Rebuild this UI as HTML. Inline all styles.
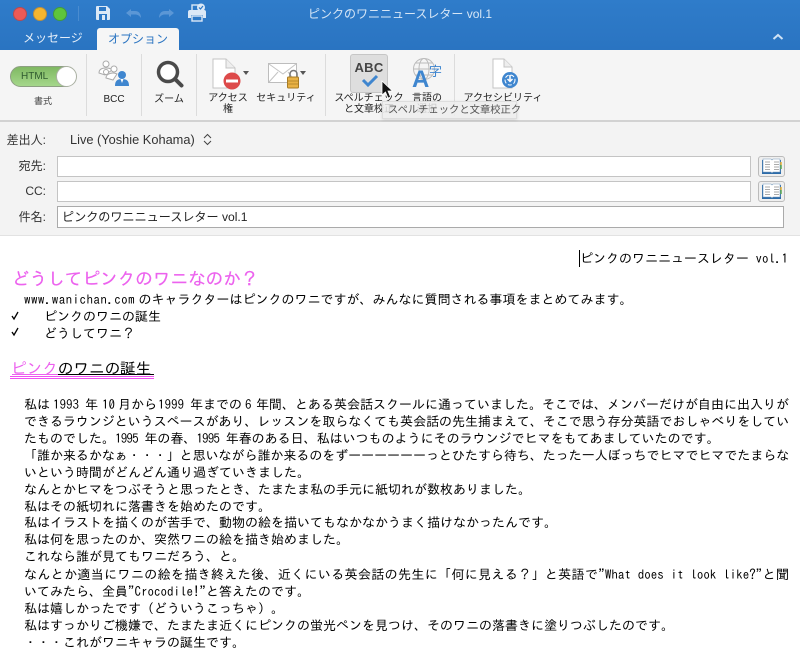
<!DOCTYPE html>
<html lang="ja"><head><meta charset="utf-8">
<style>
html,body{margin:0;padding:0;background:#fff}
#p{position:relative;width:800px;height:667px;overflow:hidden;background:#fff;font-family:"Liberation Sans","Noto Sans CJK JP",sans-serif}
.a{position:absolute;white-space:nowrap}
.r{font-size:10px;color:#222;text-align:center;line-height:11px}
.sep{position:absolute;top:54px;width:1px;height:62px;background:#dcdcdc}
.f{position:absolute;left:57px;width:692px;height:19px;background:#fff;border:1px solid #c4c4c4}
.l{position:absolute;font-size:12px;color:#333;text-align:right;width:46px;left:0;line-height:14px}
.b{position:absolute;font-family:IPAGothic,"Noto Sans CJK JP",monospace;font-size:13px;line-height:17px;color:#000;white-space:nowrap}
.j{left:24px;width:765px;white-space:normal;text-align:justify;text-align-last:justify}
.n{left:24px}
.x{letter-spacing:-.03px}
.d{letter-spacing:-.8px}
.bk{position:absolute;left:758px;width:25px;height:19px;background:#efefef;border:1px solid #bbb;border-radius:3px}
</style></head><body><div id="p">
<div class="a" style="left:0;top:0;width:800px;height:50px;background:linear-gradient(#2f7cca,#2a74c1)"></div>
<div class="a" style="left:13px;top:7px;width:12px;height:12px;border-radius:50%;background:#ec5a56;border:.5px solid #b84a50"></div>
<div class="a" style="left:33px;top:7px;width:12px;height:12px;border-radius:50%;background:#f5b52f;border:.5px solid #c0903a"></div>
<div class="a" style="left:53px;top:7px;width:12px;height:12px;border-radius:50%;background:#5ec53c;border:.5px solid #449a3c"></div>
<div class="a" style="left:78px;top:6px;width:1px;height:15px;background:#4a8cd0"></div>
<svg class="a" style="left:90px;top:0" width="130" height="26" viewBox="0 0 130 26">
<path d="M7 6h10l3 3v10a1 1 0 0 1-1 1H7a1 1 0 0 1-1-1V7a1 1 0 0 1 1-1z" fill="#dbe8f6"/>
<rect x="9" y="7" width="7" height="4" fill="#2c78c6"/><rect x="9" y="14" width="8" height="6" fill="#2c78c6"/><rect x="12" y="15" width="3" height="5" fill="#dbe8f6"/>
<path d="M36 13L41 9V11H45C49 11 51 14 51 18C49 15 47 14.500 45 14.500H41V17Z" fill="#5b97d6"/>
<path d="M36 13L41 9V11H45C49 11 51 14 51 18C49 15 47 14.500 45 14.500H41V17Z" fill="#5b97d6" transform="translate(120,0) scale(-1,1)"/>
<rect x="102" y="5" width="10" height="6" fill="none" stroke="#dbe8f6" stroke-width="1.400"/>
<path d="M100 10h14a2 2 0 0 1 2 2v6h-3v-3h-12v3h-3v-6a2 2 0 0 1 2-2z" fill="#dbe8f6"/>
<rect x="102" y="16" width="10" height="5" fill="none" stroke="#dbe8f6" stroke-width="1.400"/>
<circle cx="111" cy="7.500" r="4" fill="#dbe8f6"/><path d="M109 7.500l1.500 1.500 2.500-3" fill="none" stroke="#2c78c6" stroke-width="1.200"/>
</svg>
<div class="a" style="left:0;width:800px;top:6px;text-align:center;font-size:12px;line-height:16px;color:#d6e6f6">ピンクのワニニュースレター vol.1</div>
<div class="a" style="left:23px;top:30px;font-size:12px;line-height:16px;color:#e4eef9">メッセージ</div>
<div class="a" style="left:97px;top:28px;width:82px;height:22px;background:#f6f6f6;border-radius:3px 3px 0 0;text-align:center;font-size:12px;line-height:23px;color:#2a74c1">オプション</div>
<svg class="a" style="left:772px;top:33px" width="12" height="8"><path d="M1.500 6L6 2l4.500 4" fill="none" stroke="#cfe2f5" stroke-width="2"/></svg>

<div class="a" style="left:0;top:50px;width:800px;height:70px;background:#f5f5f5"></div>
<div class="a" style="left:0;top:120px;width:800px;height:2px;background:#d2d2d2"></div>
<div class="sep" style="left:86px"></div><div class="sep" style="left:141px"></div><div class="sep" style="left:196px"></div><div class="sep" style="left:325px"></div><div class="sep" style="left:454px"></div>

<div class="a" style="left:10px;top:66px;width:66px;height:21px;border-radius:11px;background:linear-gradient(#7fb862,#a5d78b);border:1px solid #8d9f82;box-sizing:border-box;font-size:10px;line-height:19px;color:#2f5a2f;padding-left:10px">HTML</div>
<div class="a" style="left:56px;top:66px;width:21px;height:21px;border-radius:50%;background:#fff;border:1px solid #aab0a2;box-sizing:border-box"></div>
<div class="a r" style="left:10px;width:66px;top:96px;color:#444;font-size:9px">書式</div>

<svg class="a" style="left:96px;top:58px" width="36" height="32" viewBox="0 0 36 32">
<g fill="#fff" stroke="#aaa" stroke-width="1"><circle cx="10" cy="6" r="3"/><path d="M3 15c0-4 3-5 7-5 3 0 5 .5 6 2l-7 5z"/><circle cx="18" cy="11" r="3"/><path d="M10 20c0-3 3-5 7-5 2 0 3 .500 4 1l-4 6z"/><circle cx="10" cy="14" r="2.500"/></g>
<circle cx="26" cy="17" r="4" fill="#3f86cf"/><path d="M19 28c0-5 2-7 7-7s7 2 7 7z" fill="#3f86cf"/><path d="M24.500 21l1.500 4 1.500-4z" fill="#fff"/>
</svg>
<div class="a r" style="left:87px;width:54px;top:94px">BCC</div>

<svg class="a" style="left:156px;top:60px" width="30" height="30" viewBox="0 0 30 30">
<circle cx="12" cy="12" r="9.500" fill="#fff" stroke="#4a4a4a" stroke-width="3.500"/><path d="M19.500 19.500l6 6" stroke="#4a4a4a" stroke-width="4" stroke-linecap="round"/>
</svg>
<div class="a r" style="left:142px;width:54px;top:94px">ズーム</div>

<svg class="a" style="left:212px;top:58px" width="38" height="32" viewBox="0 0 38 32">
<path d="M1 1h13l9 9v20H1z" fill="#fff" stroke="#c4c4c4"/><path d="M14 1v9h9" fill="#eee" stroke="#c4c4c4"/>
<circle cx="20" cy="23" r="8.500" fill="#dd4a4a"/><rect x="14" y="21.500" width="12" height="3" fill="#fff"/><path d="M31 13h6l-3 4z" fill="#555"/>
</svg>
<div class="a r" style="left:203px;width:50px;top:93px">アクセス<br>権</div>

<svg class="a" style="left:267px;top:62px" width="40" height="28" viewBox="0 0 40 28">
<rect x="1.500" y="1.500" width="28" height="19" fill="#fff" stroke="#bdbdbd"/><path d="M2 2l14 10L29 2M2 20l9-10M29 20l-8-10" fill="none" stroke="#c4c4c4"/>
<path d="M23 15v-3a3.500 3.500 0 0 1 7 0v3" fill="none" stroke="#777" stroke-width="1.500"/><rect x="20.500" y="15" width="11" height="11" rx="1" fill="#e9b245" stroke="#a87c25"/><path d="M21 19h10M21 22h10" stroke="#b98c30"/>
<path d="M33 9h6l-3 4z" fill="#555"/>
</svg>
<div class="a r" style="left:255px;width:62px;top:93px">セキュリティ</div>

<div class="a" style="left:350px;top:54px;width:36px;height:37px;background:#dedede;border:1px solid #c6c6c6;border-radius:3px"></div>
<div class="a" style="left:350px;top:59px;width:38px;text-align:center;font-size:13px;font-weight:bold;line-height:17px;letter-spacing:.3px;color:#444">ABC</div>
<svg class="a" style="left:360px;top:73px" width="20" height="14"><path d="M3 7l5 5L17 3" fill="none" stroke="#3f86cf" stroke-width="3"/></svg>
<svg class="a" style="left:381px;top:80px" width="13" height="19"><path d="M1 1v14l3.500-3 2.500 6 2.500-1-2.500-6h4.500z" fill="#111" stroke="#fff" stroke-width=".8"/></svg>
<div class="a r" style="left:331px;width:76px;top:93px">スペルチェック<br>と文章校正</div>

<svg class="a" style="left:411px;top:58px" width="34" height="34" viewBox="0 0 34 34">
<circle cx="13" cy="11" r="10.500" fill="none" stroke="#bbb"/><ellipse cx="13" cy="11" rx="5" ry="10.500" fill="none" stroke="#bbb"/><path d="M2.500 11h21M4 5h18M4 17h18" stroke="#bbb" fill="none"/>
<text x="1" y="29" font-family="Liberation Sans" font-weight="bold" font-size="24" fill="#3f86cf">A</text>
<text x="18" y="18" font-family="Noto Sans CJK JP" font-size="13" fill="#3f86cf">字</text>
</svg>
<div class="a r" style="left:402px;width:50px;top:93px">言語の<br>選択</div>

<svg class="a" style="left:492px;top:58px" width="30" height="32" viewBox="0 0 30 32">
<path d="M1 1h11l8 8v21H1z" fill="#fff" stroke="#c4c4c4"/><path d="M12 1v8h8" fill="#eee" stroke="#c4c4c4"/>
<circle cx="18" cy="22" r="8" fill="#3f86cf"/><circle cx="18" cy="22" r="5" fill="none" stroke="#fff" stroke-dasharray="4 2"/><path d="M18 17v6M15.500 21l2.500 2.500 2.500-2.500" fill="none" stroke="#fff" stroke-width="1.500"/>
</svg>
<div class="a r" style="left:456px;width:94px;top:93px">アクセシビリティ</div>

<div class="a" style="left:382px;top:101px;width:135px;height:18px;background:rgba(238,238,238,.82);border:1px solid #ddd;box-shadow:0 1px 3px rgba(0,0,0,.12);box-sizing:border-box"></div>
<div class="a" style="left:388px;top:102px;font-size:10.300px;line-height:17px;color:#555">スペルチェックと文章校正ク</div>

<div class="a" style="left:0;top:122px;width:800px;height:113px;background:#f3f3f3"></div>
<div class="a" style="left:0;top:235px;width:800px;height:1px;background:#e2e2e2"></div>
<div class="l" style="top:133px">差出人:</div>
<div class="a" style="left:70px;top:132px;font-size:12.800px;line-height:15px;color:#333">Live (Yoshie Kohama)</div>
<svg class="a" style="left:203px;top:133px" width="9" height="13"><path d="M1 5l3.500-3.500L8 5M1 8l3.500 3.500L8 8" fill="none" stroke="#444"/></svg>
<div class="l" style="top:159px">宛先:</div>
<div class="f" style="top:156px"></div>
<div class="l" style="top:184px">CC:</div>
<div class="f" style="top:181px"></div>
<div class="l" style="top:210px">件名:</div>
<div class="a" style="left:57px;top:206px;height:20px;background:#fff;border:1px solid #aaa;font-size:12.100px;line-height:20px;color:#222;padding-left:4px;width:721px">ピンクのワニニュースレター vol.1</div>
<div class="bk" style="top:156px"></div><div class="bk" style="top:181px"></div>
<svg class="a" style="left:761px;top:158px" width="22" height="18" viewBox="0 0 22 18"><path d="M1 2h19v14H1z" fill="#2c6ba8"/><path d="M2 1h8l1 1 1-1h7v13h-7l-1 1-1-1H2z" fill="#fff" stroke="#7a9cbd" stroke-width=".6"/><path d="M4 4h5M4 6.500h5M4 9h5M4 11.500h5M13 4h5M13 6.500h5M13 9h5M13 11.500h5" stroke="#aaa"/><path d="M20 4v3" stroke="#e8b030" stroke-width="1.500"/><path d="M20 7v4" stroke="#5aa850" stroke-width="1.500"/></svg>
<svg class="a" style="left:761px;top:183px" width="22" height="18" viewBox="0 0 22 18"><path d="M1 2h19v14H1z" fill="#2c6ba8"/><path d="M2 1h8l1 1 1-1h7v13h-7l-1 1-1-1H2z" fill="#fff" stroke="#7a9cbd" stroke-width=".6"/><path d="M4 4h5M4 6.500h5M4 9h5M4 11.500h5M13 4h5M13 6.500h5M13 9h5M13 11.500h5" stroke="#aaa"/><path d="M20 4v3" stroke="#e8b030" stroke-width="1.500"/><path d="M20 7v4" stroke="#5aa850" stroke-width="1.500"/></svg>

<div class="a" style="left:579px;top:250px;width:1px;height:17px;background:#000"></div>
<div class="b" style="left:580px;top:250px">ピンクのワニニュースレター vol.1</div>
<div class="b" style="left:12px;top:270px;font-size:17.600px;line-height:20px;color:#ec62ee;-webkit-text-stroke:.2px #ec62ee">どうしてピンクのワニなのか？</div>
<div class="b" style="left:24px;top:291px"><span style="letter-spacing:.44px">www.wanichan.com</span><span style="margin-left:3.500px">のキャラクターはピンクのワニですが、みんなに質問される事項をまとめてみます。</span></div>
<svg class="a" style="left:11px;top:311px" width="8" height="26"><path d="M1 5l2 3 4-7M1 21l2 3 4-7" fill="none" stroke="#000" stroke-width="1.300"/></svg>
<div class="b" style="left:44px;top:308px">ピンクのワニの誕生</div>
<div class="b" style="left:44px;top:325px">どうしてワニ？</div>
<div class="b" style="left:11px;top:360px;font-size:15.600px"><span style="color:#ec62ee">ピンク</span>のワニの誕生</div>
<div class="a" style="left:12px;top:374px;width:46px;height:1px;background:#ec62ee"></div>
<div class="a" style="left:58px;top:374px;width:96px;height:1px;background:#000"></div>
<div class="a" style="left:10px;top:376px;width:144px;height:1px;background:#f04ff2"></div>
<div class="a" style="left:10px;top:378px;width:144px;height:1px;background:#f04ff2"></div>

<div class="b" style="left:24px;top:396px">私は</div>
<div class="b" style="left:53px;top:396px">1993</div>
<div class="b" style="left:85px;top:396px">年</div>
<div class="b" style="left:102px;top:396px">10</div>
<div class="b" style="left:118px;top:396px">月から</div>
<div class="b" style="left:158px;top:396px">1999</div>
<div class="b" style="left:190px;top:396px">年までの</div>
<div class="b" style="left:245px;top:396px">6</div>
<div class="b" style="left:256px;top:396px">年間、</div>
<div class="b" style="left:295px;top:396px">とある英会話スクールに通っていました。そこでは、メンバーだけが自由に出入りが</div>
<div class="b n x" style="top:413px">できるラウンジというスペースがあり、レッスンを取らなくても英会話の先生捕まえて、そこで思う存分英語でおしゃべりをしてい</div>
<div class="b n" style="top:430px">たものでした。<span class="d">1995</span> 年の春、<span class="d">1995</span> 年春のある日、私はいつものようにそのラウンジでヒマをもてあましていたのです。</div>
<div class="b n x" style="top:447px">「誰か来るかなぁ・・・」と思いながら誰か来るのをずーーーーーーっとひたすら待ち、たった一人ぼっちでヒマでヒマでたまらな</div>
<div class="b n" style="top:464px">いという時間がどんどん通り過ぎていきました。</div>
<div class="b n" style="top:481px">なんとかヒマをつぶそうと思ったとき、たまたま私の手元に紙切れが数枚ありました。</div>
<div class="b n" style="top:498px">私はその紙切れに落書きを始めたのです。</div>
<div class="b n" style="top:514px">私はイラストを描くのが苦手で、動物の絵を描いてもなかなかうまく描けなかったんです。</div>
<div class="b n" style="top:531px">私は何を思ったのか、突然ワニの絵を描き始めました。</div>
<div class="b n" style="top:548px">これなら誰が見てもワニだろう、と。</div>
<div class="b j" style="top:566px">なんとか適当にワニの絵を描き終えた後、近くにいる英会話の先生に「何に見える？」と英語で"What does it look like?"と聞</div>
<div class="b n" style="top:583px">いてみたら、全員"Crocodile!"と答えたのです。</div>
<div class="b n" style="top:600px">私は嬉しかったです（どういうこっちゃ）。</div>
<div class="b n" style="top:617px">私はすっかりご機嫌で、たまたま近くにピンクの蛍光ペンを見つけ、そのワニの落書きに塗りつぶしたのです。</div>
<div class="b n" style="top:634px">・・・これがワニキャラの誕生です。</div>
</div></body></html>
